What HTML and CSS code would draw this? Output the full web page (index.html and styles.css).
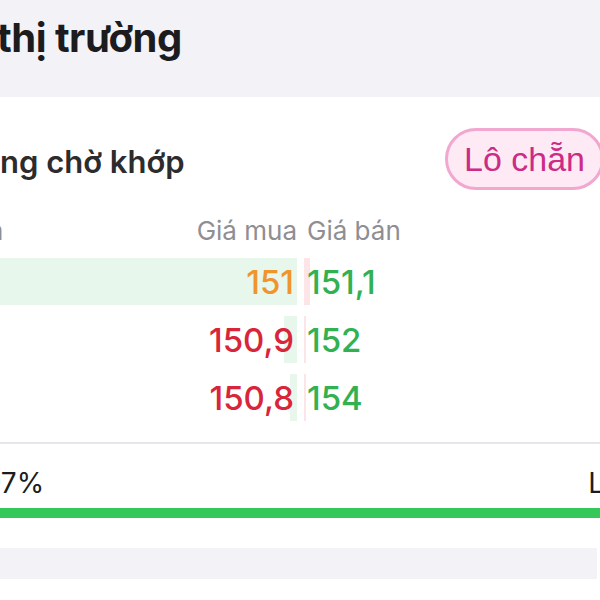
FILE: index.html
```html
<!DOCTYPE html>
<html lang="vi">
<head>
<meta charset="utf-8">
<link rel="stylesheet" href="styles.css">
</head>
<body>
<div class="page">
  <header class="top">
    <h1 class="title">thị trường</h1>
  </header>
  <section class="card">
    <div class="card-head">
      <h2 class="heading">ng chờ khớp</h2>
      <span class="pill">Lô chẵn</span>
    </div>
    <div class="book">
      <div class="hdr">
        <div class="hcell buy"><span class="cut">n</span><span>Giá mua</span></div>
        <div class="hcell sell">Giá bán</div>
      </div>
      <div class="row">
        <div class="cell buy"><div class="vol vol-buy" style="width:297px"></div><span class="px orange">151</span></div>
        <div class="cell sell"><div class="vol vol-sell" style="width:6px"></div><span class="px green">151,1</span></div>
      </div>
      <div class="row">
        <div class="cell buy"><div class="vol vol-buy" style="width:13px"></div><span class="px red">150,9</span></div>
        <div class="cell sell"><div class="vol vol-sell" style="width:2px"></div><span class="px green">152</span></div>
      </div>
      <div class="row">
        <div class="cell buy"><div class="vol vol-buy" style="width:7px"></div><span class="px red">150,8</span></div>
        <div class="cell sell"><div class="vol vol-sell" style="width:2px"></div><span class="px green">154</span></div>
      </div>
    </div>
    <div class="divider"></div>
    <div class="ratio"><span class="pct">97%</span><span class="lbl">L</span></div>
    <div class="bar"></div>
  </section>
  <div class="band"></div>
</div>
</body>
</html>
```
FILE: styles.css
```css
* { box-sizing: border-box; }
html, body { margin: 0; padding: 0; }
body {
  width: 600px;
  height: 600px;
  overflow: hidden;
  background: #ffffff;
  font-family: Inter, "Noto Sans", sans-serif;
}
.page { display: flex; flex-direction: column; }
.top {
  background: #f2f2f7;
  height: 97px;
  padding-top: 14px;
}
.title {
  margin: 0;
  font-size: 40px;
  line-height: 48px;
  font-weight: 700;
  color: #1c1c1e;
  letter-spacing: -0.5px;
  text-indent: -3px;
}
.card {
  background: #ffffff;
  display: flex;
  flex-direction: column;
  padding-bottom: 30px;
}
.card-head {
  display: flex;
  justify-content: space-between;
  align-items: center;
  padding-top: 31px;
  margin-right: -4px;
}
.heading {
  margin: 0;
  font-size: 31px;
  font-weight: 600;
  color: #2c2c2e;
  line-height: 36px;
  padding-top: 6px;
}
.pill {
  height: 62px;
  border: 3px solid #f1a7cf;
  background: #fdeaf4;
  border-radius: 31px;
  padding: 0 16px;
  display: flex;
  align-items: center;
  font-size: 34px;
  color: #cc2b86;
  font-family: "Liberation Sans", Arial, sans-serif;
}
.book { display: flex; flex-direction: column; }
.hdr {
  display: grid;
  grid-template-columns: 297px 1fr;
  column-gap: 10px;
  margin-top: 27px;
  font-size: 26px;
  line-height: 28px;
  color: #8e8e93;
}
.hcell.buy { display: flex; justify-content: space-between; }
.cut { margin-left: -12px; }
.row {
  display: grid;
  grid-template-columns: 297px 1fr;
  column-gap: 7px;
  height: 47px;
  margin-top: 11px;
}
.hdr + .row { margin-top: 13px; }
.cell {
  position: relative;
  display: flex;
  align-items: center;
  height: 47px;
}
.cell.buy { justify-content: flex-end; padding-right: 3px; }
.cell.sell { justify-content: flex-start; padding-left: 3px; }
.vol { position: absolute; top: 0; bottom: 0; }
.vol-buy { right: 0; background: #e8f7ec; }
.vol-sell { left: 0; background: #fde4e7; }
.px {
  position: relative;
  font-size: 33px;
  line-height: 38px;
  font-weight: 500;
}
.orange { color: #f0942c; }
.red { color: #d8253a; }
.green { color: #31b152; }
.divider {
  height: 2px;
  background: #e5e5ea;
  margin-top: 21px;
}
.ratio {
  display: flex;
  justify-content: space-between;
  padding-top: 22px;
  font-size: 28px;
  line-height: 34px;
  color: #1c1c1e;
}
.pct { margin-left: -16px; }
.lbl { margin-right: -4px; }
.bar {
  height: 10px;
  background: #34c759;
  margin-top: 8px;
}
.band {
  height: 31px;
  background: #f2f2f7;
  margin-right: 3px;
}
```
